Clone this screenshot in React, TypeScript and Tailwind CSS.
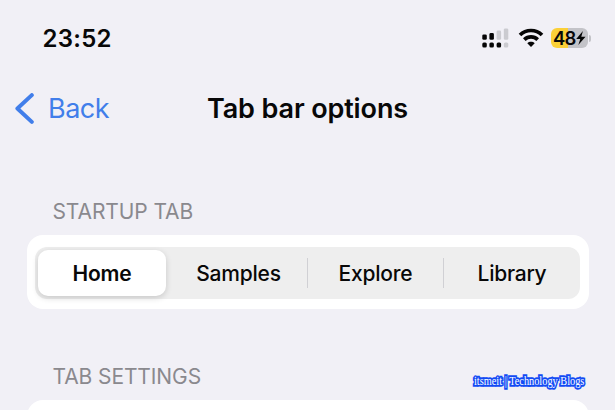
const SANS = 'font-["Inter","Liberation_Sans",sans-serif]';

function CellularIcon() {
  const bars = [
    { x: 0.3, y: 6.4, h: 5.4, on: true },
    { x: 7.4, y: 5, h: 6.8, on: true },
    { x: 14.6, y: 2.5, h: 9.3, on: false },
    { x: 21.8, y: 0.4, h: 11.4, on: false },
  ];
  return (
    <svg className="h-[20px] w-[27px]" viewBox="0 0 27 20">
      {bars.map((b, i) => (
        <g key={b.x}>
          <rect x={b.x} y={b.y} width="4.5" height={b.h} rx="1.4" fill={b.on ? '#050505' : '#cbcbd0'} />
          <rect x={b.x} y="14.6" width="4.5" height="4.8" rx="1.5" fill={i < 3 ? '#050505' : '#cbcbd0'} />
        </g>
      ))}
    </svg>
  );
}

function WifiIcon() {
  return (
    <svg className="h-[20px] w-[26px]" viewBox="0 0 26 20" fill="none" stroke="#050505" strokeWidth="3.7">
      <path d="M2 7C8.1 1 17.9 1 24 7" />
      <path d="M6.3 11.7C10.1 8 15.9 8 19.7 11.7" />
      <path d="M13 18.9l-3.7-3.7c2.1-1.9 5.3-1.9 7.4 0z" fill="#050505" stroke="none" />
    </svg>
  );
}

function Battery() {
  return (
    <div className="flex w-[41px] items-center">
      <div className="flex h-[20px] w-[36.5px] items-center rounded-[6px] bg-[linear-gradient(90deg,#fbd038_17.5px,#c3c3c8_17.5px)] pl-[2px]">
        <span className="w-[23px] text-[18.5px] leading-[24px] font-semibold tracking-[-0.9px]">48</span>
        <svg className="h-[16px] w-[10px] shrink-0" viewBox="0 0 10 16">
          <path d="M6.9 1L.2 9h4.1l-2 6.1 7.2-8.3H5.3z" fill="#050505" />
        </svg>
      </div>
      <div className="ml-[1.7px] h-[7px] w-[1.7px] rounded-r-full bg-[#c3c3c8]" />
    </div>
  );
}

function Divider() {
  return <div className="h-[30px] w-px shrink-0 bg-[#d0d0d4]" />;
}

export default function App() {
  return (
    <div className={`${SANS} flex h-[410px] w-[615px] flex-col overflow-hidden bg-[#f1f0f6] text-[#080808]`}>
      <header className="flex h-[76px] shrink-0 items-center pl-[42.5px] pr-[23px]">
        <time className="pt-[2px] text-[24px] leading-[30px] font-semibold tracking-[0.25px]">23:52</time>
        <div className="ml-auto flex items-center">
          <CellularIcon />
          <div className="ml-[8.5px] flex"><WifiIcon /></div>
          <div className="ml-[7.5px] flex"><Battery /></div>
        </div>
      </header>

      <nav className="mt-px grid h-[64px] shrink-0 grid-cols-[1fr_auto_1fr] items-center px-[15px]">
        <button className="flex items-center gap-[14px] text-[#417eea]">
          <svg className="h-[32px] w-[19px]" viewBox="0 0 19 32" fill="none" stroke="currentColor" strokeWidth="4" strokeLinecap="round" strokeLinejoin="round">
            <path d="M16.8 2.1L2.4 15.5l14.4 13.4" />
          </svg>
          <span className="text-[27px] leading-[36px] tracking-[-0.5px]">Back</span>
        </button>
        <h1 className="text-[27px] leading-[36px] font-semibold tracking-[-0.12px]">Tab bar options</h1>
        <div />
      </nav>

      <main className="flex flex-col px-[26.5px]">
        <h2 className="mt-[56px] pl-[26px] text-[21px] leading-[30px] tracking-[-0.1px] text-[#8a898e]">STARTUP TAB</h2>
        <section className="mt-[8px] h-[74px] rounded-[16px] bg-white px-[8.5px] py-[12px]">
          <div className="flex h-[52px] items-center rounded-[12px] bg-[#eeeeee] pl-[3px] text-[21px]">
            <button className="h-[46px] w-[128px] shrink-0 rounded-[10px] bg-white pt-px font-semibold tracking-[-0.25px] shadow-[0_2px_6px_rgba(0,0,0,0.16)]">Home</button>
            <button className="w-[141px] shrink-0 pt-px pl-[4px] font-medium tracking-[-0.2px]">Samples</button>
            <Divider />
            <button className="w-[135px] shrink-0 pt-px font-medium tracking-[-0.2px]">Explore</button>
            <Divider />
            <button className="flex-1 pt-px font-medium tracking-[-0.25px]">Library</button>
          </div>
        </section>
        <h2 className="mt-[53px] pl-[26px] text-[21px] leading-[30px] tracking-[-0.1px] text-[#8a898e]">TAB SETTINGS</h2>
        <section className="mt-[8px] h-[40px] rounded-[16px] bg-white" />
      </main>

      <div className='absolute top-[374px] left-[474px] origin-left scale-x-[0.86] font-["Liberation_Serif",serif] text-[12px] leading-[15px] whitespace-nowrap text-white [-webkit-text-stroke:3.5px_#124bf4] [paint-order:stroke_fill] [stroke-linejoin:round]'>
        itsmeit | Technology Blogs
      </div>
    </div>
  );
}
